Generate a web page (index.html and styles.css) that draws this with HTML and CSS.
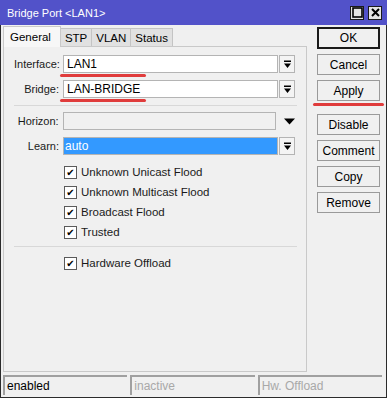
FILE: index.html
```html
<!DOCTYPE html>
<html lang="en-US">
<head>
    <meta charset="UTF-8" />
    <title>Bridge Port &lt;LAN1&gt;</title>
    <link rel="stylesheet" href="styles.css">
</head>
<body>
    <div class="window">
        <div class="titlebar">
            <span class="title">Bridge Port &lt;LAN1&gt;</span>
            <div class="title-buttons">
                <span class="tbtn"><svg width="11" height="11" viewBox="0 0 11 11"><rect x="1" y="1" width="9" height="9" fill="none" stroke="#000" stroke-width="1.6"/></svg></span>
                <span class="tbtn"><svg width="11" height="11" viewBox="0 0 11 11"><path d="M2 2 L9 9 M9 2 L2 9" stroke="#000" stroke-width="2"/></svg></span>
            </div>
        </div>

        <div class="body">
            <div class="left">
                <div class="tabs">
                    <span class="tab active">General</span>
                    <span class="tab">STP</span>
                    <span class="tab">VLAN</span>
                    <span class="tab">Status</span>
                </div>
                <div class="panel">
                    <div class="row">
                        <label>Interface:</label>
                        <div class="field">LAN1</div>
                        <span class="drop"><svg width="9" height="9" viewBox="0 0 9 9"><path d="M1 0.5 H8 V2 H1 Z M1 3.5 H8 L4.5 8 Z" fill="#000"/></svg></span>
                        <span class="mark mark-a"></span>
                    </div>
                    <div class="row">
                        <label>Bridge:</label>
                        <div class="field">LAN-BRIDGE</div>
                        <span class="drop"><svg width="9" height="9" viewBox="0 0 9 9"><path d="M1 0.5 H8 V2 H1 Z M1 3.5 H8 L4.5 8 Z" fill="#000"/></svg></span>
                        <span class="mark mark-a"></span>
                    </div>

                    <hr class="sep" />

                    <div class="row">
                        <label>Horizon:</label>
                        <div class="field disabled"></div>
                        <span class="arrow"><svg width="11" height="7" viewBox="0 0 11 7"><path d="M0 0.5 H11 L5.5 6.5 Z" fill="#000"/></svg></span>
                    </div>
                    <div class="row">
                        <label>Learn:</label>
                        <div class="field selected">auto</div>
                        <span class="drop"><svg width="9" height="9" viewBox="0 0 9 9"><path d="M1 0.5 H8 V2 H1 Z M1 3.5 H8 L4.5 8 Z" fill="#000"/></svg></span>
                    </div>

                    <div class="checks">
                        <div class="check"><span class="box">&#10004;</span>Unknown Unicast Flood</div>
                        <div class="check"><span class="box">&#10004;</span>Unknown Multicast Flood</div>
                        <div class="check"><span class="box">&#10004;</span>Broadcast Flood</div>
                        <div class="check"><span class="box">&#10004;</span>Trusted</div>
                    </div>

                    <hr class="sep" />

                    <div class="checks">
                        <div class="check"><span class="box">&#10004;</span>Hardware Offload</div>
                    </div>
                </div>
            </div>

            <div class="actions">
                <button class="btn default">OK</button>
                <button class="btn">Cancel</button>
                <button class="btn apply">Apply<span class="mark mark-b"></span></button>
                <button class="btn gap">Disable</button>
                <button class="btn">Comment</button>
                <button class="btn">Copy</button>
                <button class="btn">Remove</button>
            </div>
        </div>

        <div class="statusbar">
            <span class="cell">enabled</span>
            <span class="cell dim">inactive</span>
            <span class="cell dim">Hw. Offload</span>
        </div>
    </div>
</body>
</html>
```

FILE: styles.css
```css
* {
    margin: 0;
    padding: 0;
    box-sizing: border-box;
}

body {
    font-family: 'Liberation Sans', Arial, sans-serif;
    font-size: 11px;
    color: #000;
    background: #fff;
}

.window {
    width: 387px;
    height: 398px;
    background: #f0f0f0;
    border: 1px solid #2b2b2b;
    border-top: none;
    display: flex;
    flex-direction: column;
}

/* Title bar */
.titlebar {
    height: 25px;
    margin: 0 -1px;
    background: #5252c9;
    color: #fff;
    display: flex;
    align-items: center;
    justify-content: space-between;
    padding: 0 5px 0 7px;
}

.title {
    font-size: 11px;
}

.title-buttons {
    display: flex;
    gap: 4px;
}

.tbtn {
    width: 14px;
    height: 14px;
    background: #e4e4e4;
    border: 1px solid #1a1a1a;
    display: flex;
    align-items: center;
    justify-content: center;
}

/* Main area */
.body {
    flex: 1;
    display: flex;
    padding: 1px 0 0 2px;
}

.left {
    width: 304px;
    display: flex;
    flex-direction: column;
}

.tabs {
    display: flex;
    height: 20px;
    align-items: flex-end;
}

.tab {
    height: 18px;
    padding: 0 4px;
    background: #e1e1e1;
    border: 1px solid #c4c4c4;
    border-bottom: none;
    margin-left: -1px;
    display: flex;
    align-items: center;
    font-size: 11.5px;
}

.tab.active {
    height: 21px;
    margin-bottom: -1px;
    margin-left: 0;
    background: #f7f7f7;
    position: relative;
    z-index: 1;
    padding: 0 9px 0 6px;
    border-color: #c9c9c9;
}

.panel {
    height: 326px;
    border: 1px solid #c9c9c9;
    background: #f0f0f0;
    padding: 8px 9px 0 10px;
}

.row {
    display: flex;
    align-items: center;
    height: 18px;
    margin-bottom: 7px;
    position: relative;
}

.row label {
    width: 45px;
    text-align: right;
    margin-right: 4px;
    color: #1a1a1a;
}

.field {
    width: 215px;
    height: 18px;
    background: #fff;
    border: 1px solid #b4b4b4;
    padding: 0 3px;
    display: flex;
    align-items: center;
    font-size: 12px;
}

.field.disabled {
    background: #f0f0f0;
}

.field.selected {
    background: #3399ff;
    color: #fff;
    padding-left: 1px;
}

.drop {
    width: 16px;
    height: 18px;
    margin-left: 1px;
    border: 1px solid #b4b4b4;
    background: #f4f4f4;
    display: flex;
    align-items: center;
    justify-content: center;
}

.arrow {
    width: 16px;
    margin-left: 5px;
    display: flex;
    align-items: center;
    justify-content: center;
}

.sep {
    border: none;
    border-top: 1px solid #d8d8d8;
    margin: 4px 0 6px 0;
}

.checks {
    padding-left: 50px;
    margin-bottom: 4px;
}

.check {
    height: 20px;
    display: flex;
    align-items: center;
    color: #1a1a1a;
    font-size: 11.5px;
}

.box {
    width: 13px;
    height: 13px;
    background: #fff;
    border: 1px solid #5a5a5a;
    margin-right: 4px;
    font-size: 10px;
    line-height: 11px;
    text-align: center;
    color: #000;
    font-family: 'DejaVu Sans', sans-serif;
}

/* Red highlight strokes */
.mark {
    position: absolute;
    height: 3px;
    background: #e03c3c;
    border-radius: 2px;
}

.mark-a {
    left: 46px;
    width: 86px;
    bottom: -4px;
}

.mark-b {
    left: -5px;
    right: -5px;
    bottom: -6px;
}

/* Right buttons */
.actions {
    display: flex;
    flex-direction: column;
    gap: 5px;
    padding: 1px 0 0 10px;
}

.btn {
    width: 63px;
    height: 21px;
    font-family: 'Liberation Sans', Arial, sans-serif;
    font-size: 12px;
    color: #000;
    background: #f0f0f0;
    border: 1px solid #9a9a9a;
    position: relative;
}

.btn.default {
    height: 22px;
    border: 2px solid #1a1a1a;
}

.btn.gap {
    margin-top: 8px;
}

/* Status bar */
.statusbar {
    display: flex;
    gap: 3px;
    padding: 2px 4px 3px 2px;
    height: 24px;
}

.cell {
    flex: 1;
    height: 20px;
    border-top: 2px solid #a0a0a0;
    border-left: 2px solid #a0a0a0;
    padding-left: 2px;
    display: flex;
    align-items: center;
    font-size: 12px;
}

.cell.dim {
    color: #a8a8a8;
}
```
